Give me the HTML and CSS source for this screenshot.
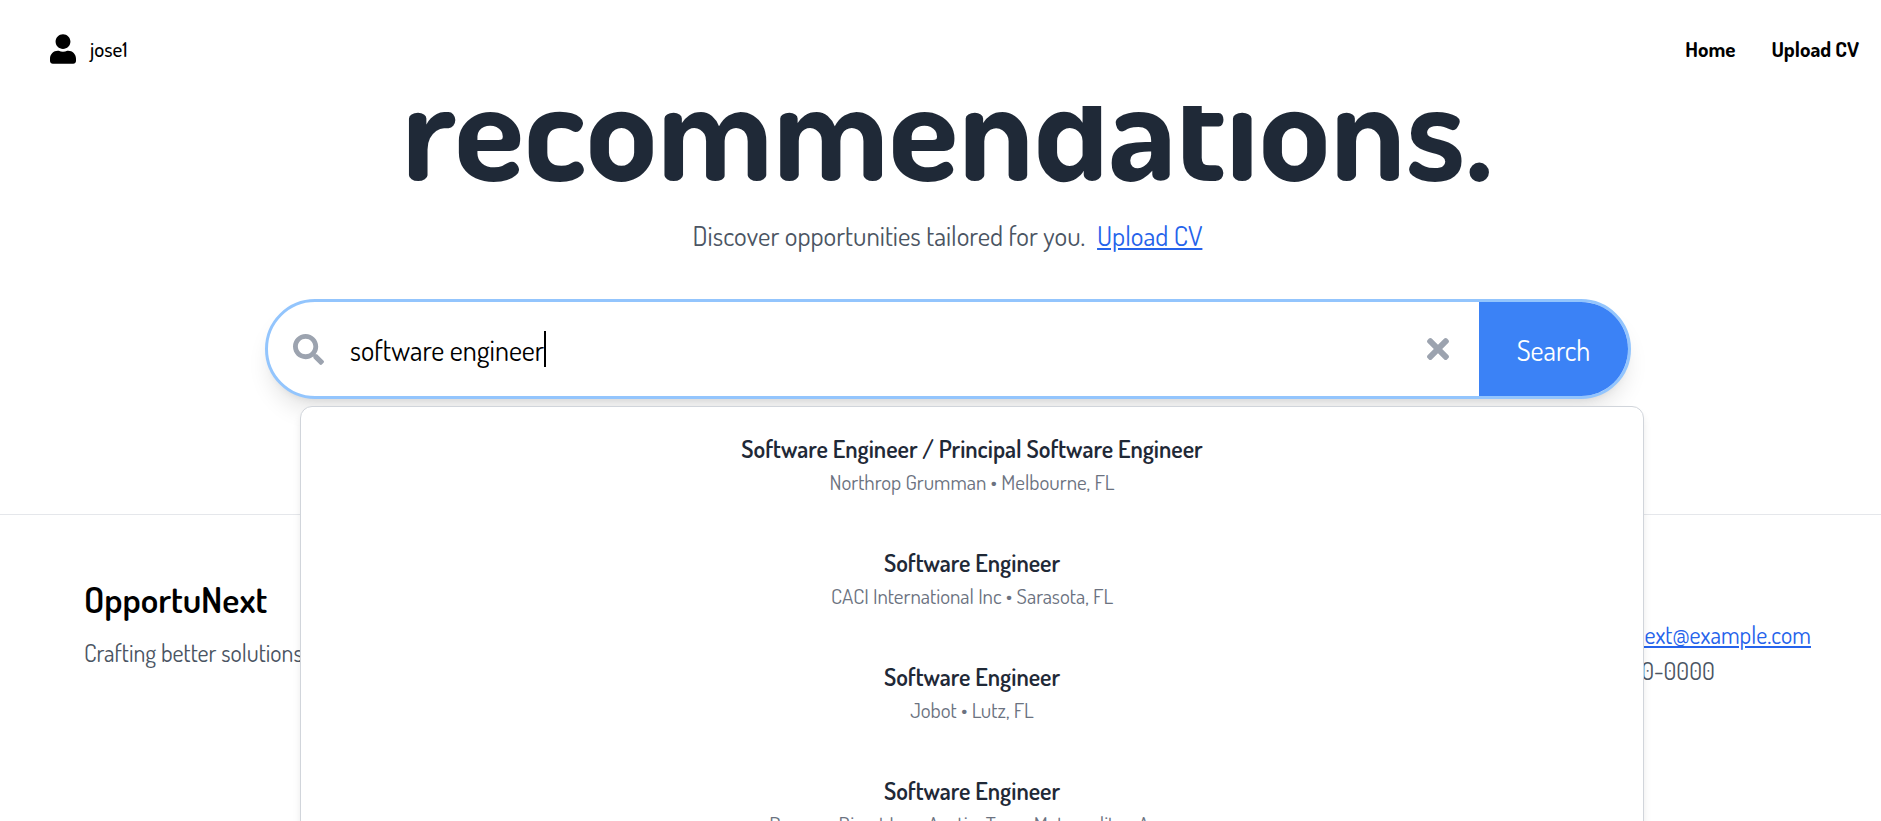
FILE: index.html
```html
<!DOCTYPE html>
<html lang="en">
<head>
<meta charset="utf-8">
<title>OpportuNext</title>
<link rel="stylesheet" href="styles.css">
</head>
<body>
<header class="topbar">
  <div class="user">
    <svg class="user-icon" viewBox="0 0 448 512"><path fill="currentColor" d="M224 256c70.700 0 128-57.300 128-128S294.700 0 224 0 96 57.300 96 128s57.300 128 128 128zm89.600 32h-16.700c-22.200 10.200-46.900 16-72.900 16s-50.600-5.800-72.900-16h-16.700C60.200 288 0 348.200 0 422.400V464c0 26.500 21.500 48 48 48h352c26.500 0 48-21.500 48-48v-41.600c0-74.200-60.200-134.400-134.400-134.400z"/></svg>
    <span>jose1</span>
  </div>
  <nav class="nav"><a>Home</a><a>Upload CV</a></nav>
</header>
<main class="hero">
  <h1 class="headline">recommendations.</h1>
  <p class="tagline"><span>Discover opportunities tailored for you.</span><a class="link">Upload CV</a></p>
  <div class="search">
    <div class="searchbar">
      <svg class="glass" viewBox="0 0 512 512"><path fill="currentColor" d="M505 442.700L405.300 343c-4.500-4.500-10.600-7-17-7H372c27.600-35.300 44-79.700 44-128C416 93.100 322.900 0 208 0S0 93.100 0 208s93.100 208 208 208c48.300 0 92.700-16.400 128-44v16.300c0 6.400 2.500 12.500 7 17l99.700 99.700c9.400 9.400 24.600 9.400 33.900 0l28.300-28.300c9.400-9.400 9.400-24.600.1-34zM208 336c-70.700 0-128-57.200-128-128 0-70.700 57.200-128 128-128 70.700 0 128 57.200 128 128 0 70.700-57.200 128-128 128z"/></svg>
      <div class="field"><span class="query">software engineer</span><i class="caret"></i></div>
      <svg class="clear" viewBox="0 80 352 352"><path fill="currentColor" d="M242.720 256l100.070-100.070c12.280-12.280 12.280-32.190 0-44.480l-22.240-22.240c-12.280-12.280-32.190-12.280-44.480 0L176 189.280 75.930 89.210c-12.280-12.280-32.190-12.280-44.480 0L9.210 111.450c-12.280 12.280-12.280 32.190 0 44.480L109.280 256 9.210 356.070c-12.280 12.280-12.280 32.190 0 44.480l22.240 22.240c12.280 12.280 32.200 12.280 44.480 0L176 322.720l100.070 100.070c12.280 12.280 32.200 12.280 44.480 0l22.240-22.240c12.280-12.280 12.280-32.190 0-44.480L242.720 256z"/></svg>
      <button class="go">Search</button>
    </div>
    <ul class="results">
      <li><b>Software Engineer / Principal Software Engineer</b><span>Northrop Grumman • Melbourne, FL</span></li>
      <li><b>Software Engineer</b><span>CACI International Inc • Sarasota, FL</span></li>
      <li><b>Software Engineer</b><span>Jobot • Lutz, FL</span></li>
      <li><b>Software Engineer</b><span>Resume Direct Inc • Austin, Texas Metropolitan Area</span></li>
    </ul>
  </div>
</main>
<footer class="footer">
  <div><h2 class="brand">OpportuNext</h2><p>Crafting better solutions</p></div>
  <div class="contact"><p>Email: <a class="link">opportunext@example.com</a></p><p>Phone: 000-000-0000</p></div>
</footer>
</body>
</html>
```

FILE: styles.css
```css
* { box-sizing: border-box; margin: 0; padding: 0; }
body {
  width: 1881px; height: 821px; overflow: hidden;
  display: flex; flex-direction: column;
  background: #fff; color: #000;
  font-family: "Dosis", "Open Sans", sans-serif;
  font-size: 24px; line-height: 36px;
}
.link { color: #2563eb; text-decoration: underline; }

.topbar {
  position: relative; z-index: 2; flex: none;
  height: 106px; padding: 0 22px 8px 50px;
  display: flex; align-items: center; justify-content: space-between;
  background: #fff; font-size: 21px;
}
.user { display: flex; align-items: center; gap: 14px; font-weight: 500; }
.user-icon { width: 26px; height: 30px; }
.nav { display: flex; gap: 36px; font-weight: 700; }

.hero {
  flex: none; height: 408px; padding: 0 16px 0 30px;
  display: flex; flex-direction: column; align-items: center;
}
.headline {
  margin-top: -54px; font-size: 144px; line-height: 144px;
  font-weight: 700; color: #1f2937; white-space: nowrap;
}
.tagline {
  display: flex; gap: 12px; margin-top: 18px;
  font-size: 27px; line-height: 42px; color: #4b5563;
}
.search { position: relative; width: 1366px; margin: 43px 0 0 1px; }
.searchbar {
  display: flex; align-items: center; height: 100px; overflow: hidden;
  border: 3px solid #93c5fd; border-radius: 50px; background: #fff;
  box-shadow: 0 15px 22px -4px rgba(0,0,0,.1), 0 6px 9px -6px rgba(0,0,0,.1);
  padding-left: 25px; font-size: 28.3px;
}
.glass { width: 31px; height: 31px; color: #9ca3af; }
.field { flex: 1; display: flex; align-items: center; margin-left: 26px; }
.query { padding-top: 2px; }
.caret { width: 2px; height: 36px; background: #000; }
.clear { width: 22px; height: 22px; margin-right: 30px; color: #9ca3af; }
.go {
  width: 149px; height: 100%; border: 0; padding-top: 2px;
  background: #3b82f6; color: #fff; font: inherit;
}
.results {
  position: absolute; z-index: 1; top: 107px; left: 35px; width: 1344px; height: 640px;
  list-style: none; text-align: center;
  background: #fff; border: 1px solid #d1d5db; border-radius: 12px;
  box-shadow: 0 6px 9px -1px rgba(0,0,0,.1);
}
.results li { display: flex; flex-direction: column; height: 114px; padding: 24px; }
.results b { font-weight: 600; color: #1f2937; }
.results span { font-size: 21px; line-height: 30px; color: #6b7280; }

.footer {
  flex: 1; border-top: 1px solid #e5e7eb; padding: 60px 70px 0 84px;
  display: flex; justify-content: space-between; color: #4b5563;
}
.brand { font-size: 36px; line-height: 48px; font-weight: 600; color: #000; margin-bottom: 12px; }
.contact { padding-top: 42px; }
```
